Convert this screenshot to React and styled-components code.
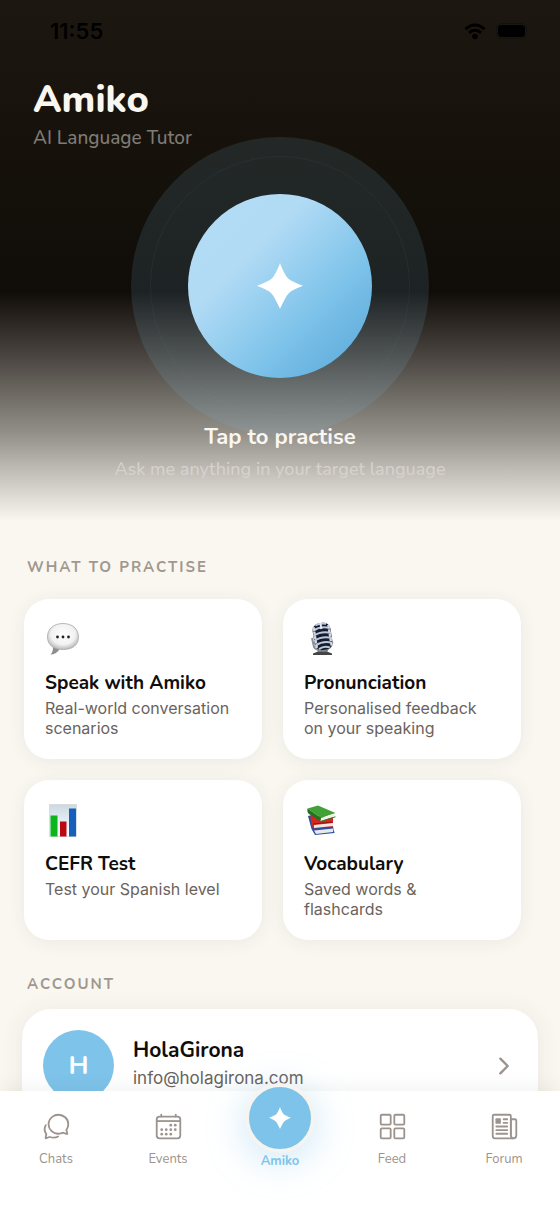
import React from 'react'
import styled, { createGlobalStyle } from 'styled-components'
import {
    IoChatbubblesOutline,
    IoCalendarOutline,
    IoGridOutline,
    IoNewspaperOutline,
    IoChevronForward,
} from 'react-icons/io5'

const GlobalStyle = createGlobalStyle`
    * {
        box-sizing: border-box;
    }
    body {
        margin: 0;
        background: #faf7f1;
        font-family: Nunito, "Open Sans", sans-serif;
    }
    h1, h2, h3, p {
        margin: 0;
    }
    button {
        border: none;
        padding: 0;
        font-family: inherit;
        cursor: pointer;
    }
    svg {
        flex: none;
    }
`

const Screen = styled.div`
    height: 100vh;
    display: flex;
    flex-direction: column;
`
const Scroll = styled.main`
    flex: 1;
    min-height: 0;
    overflow-y: auto;
    scrollbar-width: none;
`

/* hero */
const Hero = styled.header`
    padding-bottom: 40px;
    background: linear-gradient(
        #1d1711 0%,
        #16120b 28%,
        #100c08 56%,
        #48433e 68%,
        #74706a 77%,
        #928e88 83%,
        #bebab4 90%,
        #d6d3cd 94%,
        #faf7f1 100%
    );
`
const StatusBar = styled.div`
    height: 62px;
    padding: 0 32px 0 50px;
    display: flex;
    align-items: center;
    justify-content: space-between;
`
const Time = styled.span`
    font-family: Inter, sans-serif;
    font-size: 22px;
    font-weight: 600;
    color: #000;
`
const StatusIcons = styled.div`
    display: flex;
    align-items: center;
    gap: 10px;
`
const Heading = styled.div`
    padding: 13px 33px 0;
`
const Title = styled.h1`
    font-size: 38px;
    line-height: 50px;
    font-weight: 800;
    color: #faf7f1;
`
const Subtitle = styled.p`
    margin-top: 1px;
    font-size: 19px;
    line-height: 24px;
    font-weight: 500;
    color: #7f7b76;
`
const Practise = styled.div`
    padding-top: 44px;
    display: flex;
    flex-direction: column;
    align-items: center;
    text-align: center;
`
const Orb = styled.button`
    position: relative;
    width: 184px;
    height: 184px;
    border-radius: 50%;
    display: flex;
    align-items: center;
    justify-content: center;
    background: linear-gradient(135deg, #b3ddf6 0%, #b1dbf5 33%, #7ec3ea 66%, #55a5d6 100%);
    box-shadow: 0 0 0 57px rgba(126, 195, 234, 0.13);

    &::before {
        content: "";
        position: absolute;
        inset: -38px;
        border: 1px solid rgba(126, 195, 234, 0.06);
        border-radius: 50%;
    }
`
const OrbLabel = styled.h2`
    margin-top: 45px;
    font-size: 22px;
    line-height: 28px;
    font-weight: 700;
    color: #faf7f1;
`
const OrbHint = styled.p`
    margin-top: 6px;
    font-size: 18px;
    line-height: 24px;
    font-weight: 500;
    color: #d5d2cd;
`

/* sections */
const Section = styled.section`
    padding: ${(props) => props.$pad};
`
const SectionTitle = styled.h2`
    padding-left: ${(props) => props.$indent};
    font-size: 15px;
    line-height: 20px;
    font-weight: 700;
    letter-spacing: 2px;
    text-transform: uppercase;
    color: #a0978f;
`
const Grid = styled.div`
    margin-top: 22px;
    display: grid;
    grid-template-columns: 1fr 1fr;
    grid-auto-rows: 160px;
    gap: 21px;
`
const Card = styled.button`
    padding: 22px 24px 16px 21px;
    display: flex;
    flex-direction: column;
    align-items: flex-start;
    text-align: left;
    background: #fff;
    border-radius: 25px;
    box-shadow: 0 2px 18px rgba(40, 50, 60, 0.07);
`
const CardTitle = styled.span`
    margin-top: 13px;
    font-size: 19px;
    line-height: 26px;
    font-weight: 700;
    color: #100d0a;
`
const CardText = styled.span`
    margin-top: 2px;
    font-family: Inter, sans-serif;
    font-size: 16px;
    line-height: 20px;
    color: #6a635d;
`
const AccountCard = styled.button`
    width: 100%;
    margin-top: 15px;
    padding: 21px;
    display: flex;
    align-items: center;
    text-align: left;
    background: #fff;
    border-radius: 29px;
    box-shadow: 0 2px 24px rgba(60, 50, 30, 0.08);
`
const Avatar = styled.span`
    width: 71px;
    height: 71px;
    border-radius: 50%;
    display: flex;
    align-items: center;
    justify-content: center;
    background: #7ec3ea;
    color: #fff;
    font-size: 26px;
    font-weight: 700;
`
const AccountInfo = styled.span`
    flex: 1;
    margin-left: 19px;
    padding-bottom: 4px;
    display: flex;
    flex-direction: column;
`
const AccountName = styled.span`
    font-size: 21px;
    line-height: 28px;
    font-weight: 700;
    color: #100d0a;
`
const AccountEmail = styled.span`
    font-family: Inter, sans-serif;
    font-size: 17px;
    line-height: 28px;
    color: #6a635d;
`

/* bottom tabs */
const TabBar = styled.nav`
    position: relative;
    height: 121px;
    display: grid;
    grid-template-columns: repeat(5, 1fr);
    align-items: start;
    background: #fff;
    box-shadow: 0 -2px 18px rgba(40, 50, 60, 0.07);
`
const Tab = styled.a`
    padding-top: 21px;
    display: flex;
    flex-direction: column;
    align-items: center;
    gap: 10px;
    font-size: 13px;
    line-height: 16px;
    color: #9d938d;
    text-decoration: none;
`
const ActiveTab = styled(Tab)`
    margin-top: -8px;
    padding-top: 0;
    gap: 0;
    font-weight: 700;
    color: #7ec3ea;
`
const Fab = styled.span`
    width: 70px;
    height: 70px;
    border: 4px solid #f6f4f0;
    border-radius: 50%;
    display: flex;
    align-items: center;
    justify-content: center;
    background: #7ec3ea;
    box-shadow: 0 7px 38px rgba(126, 195, 234, 0.4);
`

const Star = ({ size }) => (
    <svg width={size} height={size} viewBox="0 0 46 46" fill="#fff">
        <path d="M23 0C24 3 27 10 29.500 13.500C31 15.500 33 17 35 18C38 19.600 42.500 21.700 46 22.700C43 24 37 26.300 34.500 28C32 29.500 30.500 31.500 29 34C27 37.500 24.300 43 23 46C21.800 43 19 37.500 17 34C15.500 31.500 14 29.500 11.500 28C9 26.300 3 24 0 22.700C3.500 21.700 8 19.600 11 18C13 17 15 15.500 16.500 13.500C19 10 22 3 23 0Z" />
    </svg>
)

const WifiIcon = () => (
    <svg width="22" height="17" viewBox="0 0 22 17" fill="none" stroke="#000" strokeWidth="3">
        <path d="M1.500 6.300C7 .6 15 .6 20.500 6.300" />
        <path d="M5 9.900C8.500 6.500 13.500 6.500 17 9.900" />
        <circle cx="11" cy="13.500" r="2.800" fill="#000" stroke="none" />
    </svg>
)

const BatteryIcon = () => (
    <svg width="32" height="16" viewBox="0 0 32 16">
        <rect x=".5" y=".5" width="30" height="15" rx="5" fill="none" stroke="#14100b" />
        <rect x="2" y="2" width="27" height="12" rx="4" fill="#000" />
    </svg>
)

const BubbleEmoji = () => (
    <svg width="36" height="36" viewBox="0 0 36 36">
        <defs>
            <radialGradient id="bubble" cx=".5" cy=".42" r=".6">
                <stop offset="0" stopColor="#fff" />
                <stop offset=".65" stopColor="#f2f2f2" />
                <stop offset="1" stopColor="#b4b4b4" />
            </radialGradient>
        </defs>
        <path d="M8 25.500C8.200 29 7.500 31.500 5.500 33.500C9 33.500 12.500 31.500 14.500 28.500Z" fill="#8d8d8d" />
        <path
            d="M18 2.500C27.500 2.500 33.500 8 33.500 16C33.500 24 27.500 28.500 18 28.500C8.500 28.500 2.500 24 2.500 16C2.500 8 8.500 2.500 18 2.500Z"
            fill="url(#bubble)"
            stroke="#aaa"
            strokeWidth=".8"
        />
        <circle cx="12.500" cy="16" r="1.400" fill="#222" />
        <circle cx="18" cy="16" r="1.400" fill="#222" />
        <circle cx="23.500" cy="16" r="1.400" fill="#222" />
    </svg>
)

const MicEmoji = () => (
    <svg width="36" height="36" viewBox="0 0 36 36">
        <path d="M9 32.500L14 30.500H23L28 32.500V34H9Z" fill="#444" />
        <path d="M12 26L14 31H23L26 26Z" fill="#777" />
        <path d="M8 17L10 26C12 30 24 30 27 25L28.500 21" fill="none" stroke="#8a8f98" strokeWidth="2" />
        <g transform="rotate(-9 18 15)">
            <rect x="9.500" y="2" width="18" height="27" rx="7" fill="#171c28" />
            <path
                d="M10 8.500Q18.500 4.500 27 8.500M9.500 13.500Q18.500 9.500 27.500 13.500M9.500 18.500Q18.500 14.500 27.500 18.500M10 23.500Q18.500 19.500 27 23.500M13 27.500Q18.500 24.500 24 27.500M13 3.500Q18.500 1.500 24 3.500"
                fill="none"
                stroke="#b9c8e2"
                strokeWidth="2"
            />
            <path d="M11 5V26M26 5V26" stroke="#d5d9df" strokeWidth="2.400" strokeDasharray="3 1.500" />
            <path d="M18.500 2V8" stroke="#e5e8ee" strokeWidth="2" />
        </g>
    </svg>
)

const ChartEmoji = () => (
    <svg width="36" height="36" viewBox="0 0 36 36">
        <defs>
            <linearGradient id="chart" x1="0" y1="0" x2="0" y2="1">
                <stop offset="0" stopColor="#cdd8e0" />
                <stop offset=".5" stopColor="#e3edf5" />
                <stop offset="1" stopColor="#fbfcfd" />
            </linearGradient>
        </defs>
        <rect x="4.500" y="2.500" width="27" height="32" fill="url(#chart)" stroke="#cfd6da" strokeWidth=".7" />
        <rect x="5.500" y="13.500" width="7" height="21" fill="#0db51c" />
        <rect x="15" y="19.500" width="6.500" height="15" fill="#b90a12" />
        <rect x="24" y="6.500" width="7" height="28" fill="#155fbd" />
    </svg>
)

const BooksEmoji = () => (
    <svg width="36" height="36" viewBox="0 0 36 36">
        <path d="M4 14L8 13L29 24.500L30.500 31L11 33L7.500 27Z" fill="#2b4da0" />
        <path d="M10 28.500L29.500 26.500L29 30L12 32Z" fill="#e6e9ee" />
        <path d="M6.500 13.500L29 15.500V24.500L10 26.500C7 24 6.500 17 6.500 13.500Z" fill="#d3271f" />
        <path d="M10 23L29 21V24L10 26Z" fill="#f1e7e4" />
        <path d="M9 22L28.500 20" stroke="#8f1512" />
        <path d="M3.500 6.500L14 3.500L31.500 11L17 16Z" fill="#42a136" />
        <path d="M3.500 6.500C3 9 3.500 11 5 12L16.500 19.500L17 16Z" fill="#257020" />
        <path d="M17 16L31 11.500L30.500 14.500L16.500 19.200Z" fill="#f2f3ee" />
        <path d="M16.500 19.500L31.500 14.800" stroke="#2d7d27" />
    </svg>
)

const practiceItems = [
    { title: 'Speak with Amiko', text: 'Real-world conversation scenarios', Icon: BubbleEmoji },
    { title: 'Pronunciation', text: 'Personalised feedback on your speaking', Icon: MicEmoji },
    { title: 'CEFR Test', text: 'Test your Spanish level', Icon: ChartEmoji },
    { title: 'Vocabulary', text: 'Saved words & flashcards', Icon: BooksEmoji },
]

export default function App() {
    return (
        <>
            <GlobalStyle />
            <Screen>
                <Scroll>
                    <Hero>
                        <StatusBar>
                            <Time>11:55</Time>
                            <StatusIcons>
                                <WifiIcon />
                                <BatteryIcon />
                            </StatusIcons>
                        </StatusBar>
                        <Heading>
                            <Title>Amiko</Title>
                            <Subtitle>AI Language Tutor</Subtitle>
                        </Heading>
                        <Practise>
                            <Orb aria-label="Tap to practise">
                                <Star size={46} />
                            </Orb>
                            <OrbLabel>Tap to practise</OrbLabel>
                            <OrbHint>Ask me anything in your target language</OrbHint>
                        </Practise>
                    </Hero>
                    <Section $pad="36px 39px 0 24px">
                        <SectionTitle $indent="3px">What to practise</SectionTitle>
                        <Grid>
                            {practiceItems.map(({ title, text, Icon }) => (
                                <Card key={title}>
                                    <Icon />
                                    <CardTitle>{title}</CardTitle>
                                    <CardText>{text}</CardText>
                                </Card>
                            ))}
                        </Grid>
                    </Section>
                    <Section $pad="34px 22px 40px">
                        <SectionTitle $indent="5px">Account</SectionTitle>
                        <AccountCard>
                            <Avatar>H</Avatar>
                            <AccountInfo>
                                <AccountName>HolaGirona</AccountName>
                                <AccountEmail>info@holagirona.com</AccountEmail>
                            </AccountInfo>
                            <IoChevronForward size={26} color="#9d938d" />
                        </AccountCard>
                    </Section>
                </Scroll>
                <TabBar>
                    <Tab href="#chats">
                        <IoChatbubblesOutline size={29} />
                        Chats
                    </Tab>
                    <Tab href="#events">
                        <IoCalendarOutline size={29} />
                        Events
                    </Tab>
                    <ActiveTab href="#amiko" aria-current="page">
                        <Fab>
                            <Star size={22} />
                        </Fab>
                        Amiko
                    </ActiveTab>
                    <Tab href="#feed">
                        <IoGridOutline size={29} />
                        Feed
                    </Tab>
                    <Tab href="#forum">
                        <IoNewspaperOutline size={29} />
                        Forum
                    </Tab>
                </TabBar>
            </Screen>
        </>
    )
}
